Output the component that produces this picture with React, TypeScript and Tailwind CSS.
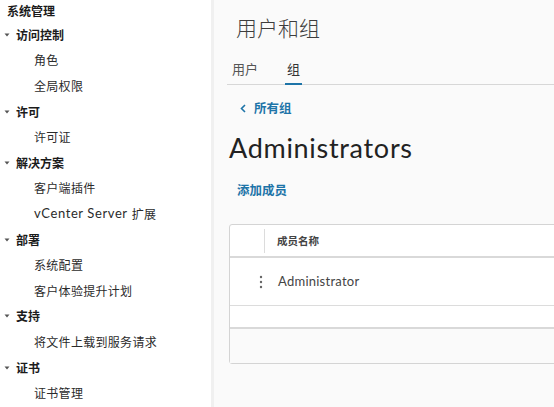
import React from "react";

const CJK = "font-['Noto_Sans_CJK_SC',sans-serif]";
const LATIN = "font-['Lato','Noto_Sans_CJK_SC',sans-serif]";

type Item = { label: string; latin?: string };
type Section = { title: string; items: Item[] };

const sections: Section[] = [
  { title: "访问控制", items: [{ label: "角色" }, { label: "全局权限" }] },
  { title: "许可", items: [{ label: "许可证" }] },
  { title: "解决方案", items: [{ label: "客户端插件" }, { latin: "vCenter Server", label: "扩展" }] },
  { title: "部署", items: [{ label: "系统配置" }, { label: "客户体验提升计划" }] },
  { title: "支持", items: [{ label: "将文件上载到服务请求" }] },
  { title: "证书", items: [{ label: "证书管理" }] },
];

function Caret() {
  return (
    <svg width="6" height="4" viewBox="0 0 6 4" className="shrink-0">
      <path d="M0.5 0.5 L5.5 0.5 L3 3.5 Z" fill="#555" />
    </svg>
  );
}

function Sidebar() {
  return (
    <aside className={`w-[214px] shrink-0 h-full bg-white border-r-[3px] border-[#f0f0f0] ${CJK} text-[12px] text-[#2b2b2b]`}>
      <div className="h-[22px] flex items-center pl-[7px] font-bold text-[#1b1b1b]">系统管理</div>
      {sections.map((s) => (
        <div key={s.title}>
          <div className="h-[25.6px] flex items-center pl-[4px] gap-[6px] font-bold text-[#1b1b1b]">
            <Caret />
            <span>{s.title}</span>
          </div>
          {s.items.map((it) => (
            <div key={it.label} className="h-[25.6px] flex items-center pl-[34px] tracking-[0.3px]">
              {it.latin && (
                <span className={`${LATIN} text-[13px] tracking-[0.6px] mr-[4px]`}>{it.latin}</span>
              )}
              <span>{it.label}</span>
            </div>
          ))}
        </div>
      ))}
    </aside>
  );
}

function Kebab() {
  return (
    <svg width="4" height="14" viewBox="0 0 4 14">
      <circle cx="2" cy="2" r="1.2" fill="#666" />
      <circle cx="2" cy="7" r="1.2" fill="#666" />
      <circle cx="2" cy="12" r="1.2" fill="#666" />
    </svg>
  );
}

function MainPanel() {
  return (
    <main className={`flex-1 h-full bg-[#fafafa] pl-[11px] overflow-hidden ${CJK}`}>
      <div className="h-[55px] flex items-center pl-[11px] text-[21px] text-[#3d3d3d] font-light">用户和组</div>

      <div className="ml-[2px] h-[30px] flex items-end border-b border-[#d7d7d7] w-[400px]">
        <div className="h-full flex items-center pl-[5px] pr-[27px] pb-[2px] text-[13px] text-[#555]">用户</div>
        <div className="h-full flex items-center px-[1px] pb-[2px] text-[13px] text-[#333] border-b-[2px] border-[#1d74a8] mb-[-1px]">
          <span className="px-[1px]">组</span>
        </div>
      </div>

      <div className="h-[46px] flex items-center pl-[15px] gap-[8px] text-[12.5px] font-bold text-[#1d74a8]">
        <svg width="6" height="9" viewBox="0 0 6 9">
          <path d="M5 1 L1.5 4.5 L5 8" stroke="#1d74a8" strokeWidth="1.6" fill="none" />
        </svg>
        <span>所有组</span>
      </div>

      <div className={`h-[35px] flex items-center pl-[4px] text-[27px] tracking-[0.7px] text-[#222] ${LATIN}`}>Administrators</div>

      <div className="h-[49px] flex items-center pl-[12px] text-[12.5px] font-bold text-[#1d74a8]">添加成员</div>

      <div className="mt-[9px] ml-[4px] w-[400px] border border-[#d4d4d4] rounded-[3px] bg-white">
        <div className="h-[33px] flex items-center border-b-[2px] border-[#d9d9d9]">
          <div className="w-[35px] h-[24px] border-r border-[#dcdcdc]" />
          <div className="pl-[12px] text-[10.5px] font-bold text-[#444]">成员名称</div>
        </div>
        <div className="h-[48px] flex items-center border-b border-[#dcdcdc]">
          <div className="w-[45px] pl-[29px] flex">
            <Kebab />
          </div>
          <div className={`pl-[3px] text-[13px] tracking-[0.25px] text-[#444] ${LATIN}`}>Administrator</div>
        </div>
        <div className="h-[23px] border-b-[2px] border-[#d9d9d9]" />
        <div className="h-[34px] bg-[#fafafa]" />
      </div>
    </main>
  );
}

export default function App() {
  return (
    <div className="flex w-[554px] h-[407px] overflow-hidden bg-white">
      <Sidebar />
      <MainPanel />
    </div>
  );
}
